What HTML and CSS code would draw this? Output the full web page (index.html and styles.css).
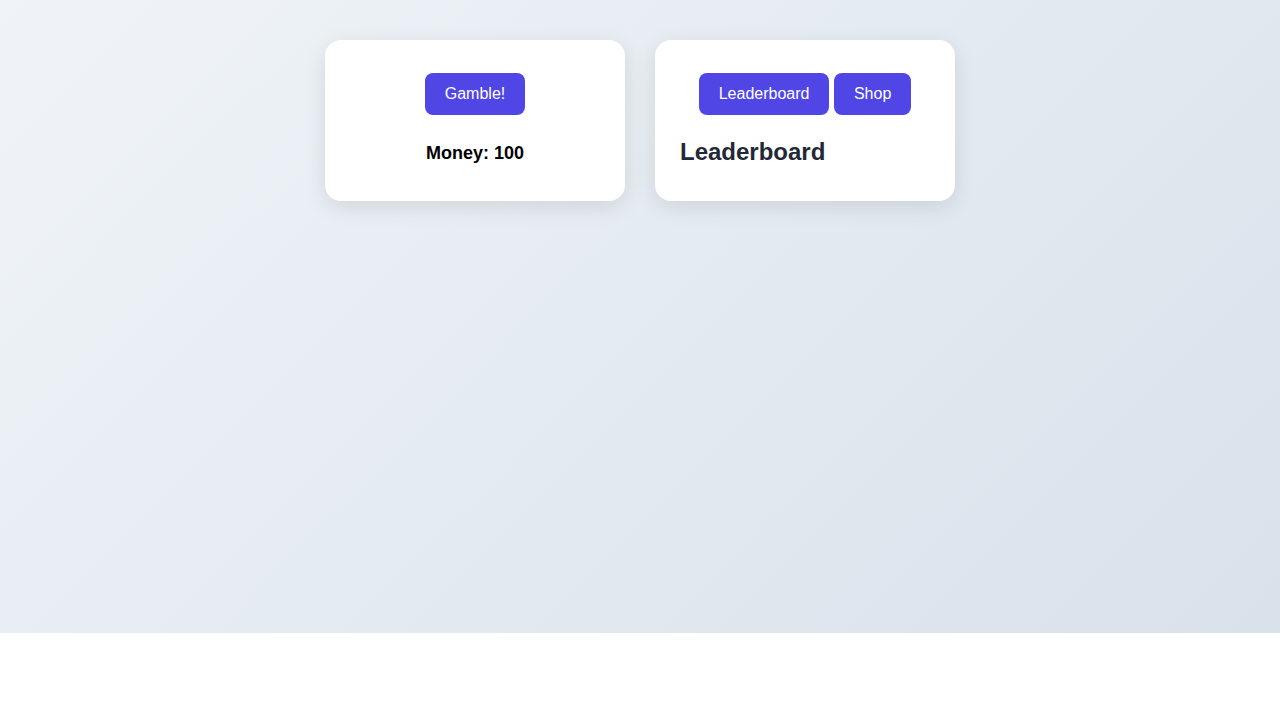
FILE: index.html
```html
<!DOCTYPE html>
<html lang="en">
<head>
  <meta charset="UTF-8">
  <meta name="viewport" content="width=device-width, initial-scale=1.0">
  <title>Gamble</title>
  <link rel="stylesheet" href="styles.css">
</head>
<body>
  <div class="page">
    <div class="card">
      <div class="buttons">
        <button class="btn">Gamble!</button>
      </div>
      <div class="money">Money: 100</div>
    </div>

    <div class="card">
      <div class="buttons">
        <button class="btn">Leaderboard</button>
        <button class="btn">Shop</button>
      </div>
      <h2>Leaderboard</h2>
    </div>
  </div>
</body>
</html>
```

FILE: styles.css
```css
body {
  margin: 0;
  font-family: "Liberation Sans", Arial, sans-serif;
  background: white;
}
.page {
  height: 633px;
  box-sizing: border-box;
  padding-top: 40px;
  display: flex;
  justify-content: center;
  align-items: flex-start;
  gap: 30px;
  background: linear-gradient(135deg, #f0f4f8, #d9e1eb);
}
.card {
  width: 300px;
  min-height: 161px;
  box-sizing: border-box;
  padding: 25px;
  background: white;
  border-radius: 16px;
  box-shadow: 0 6px 22px rgba(0,0,0,0.1);
}
.buttons {
  text-align: center;
  margin-top: 8px;
}
.btn {
  font-family: inherit;
  font-size: 16px;
  line-height: normal;
  padding: 12px 20px;
  border: none;
  border-radius: 8px;
  background: #4f46e5;
  color: white;
  cursor: pointer;
}
.money {
  margin-top: 28px;
  text-align: center;
  font-size: 18px;
  font-weight: bold;
  color: #000;
}
h2 {
  margin: 23px 0 0 0;
  font-size: 24px;
  color: #1f2937;
}
```
